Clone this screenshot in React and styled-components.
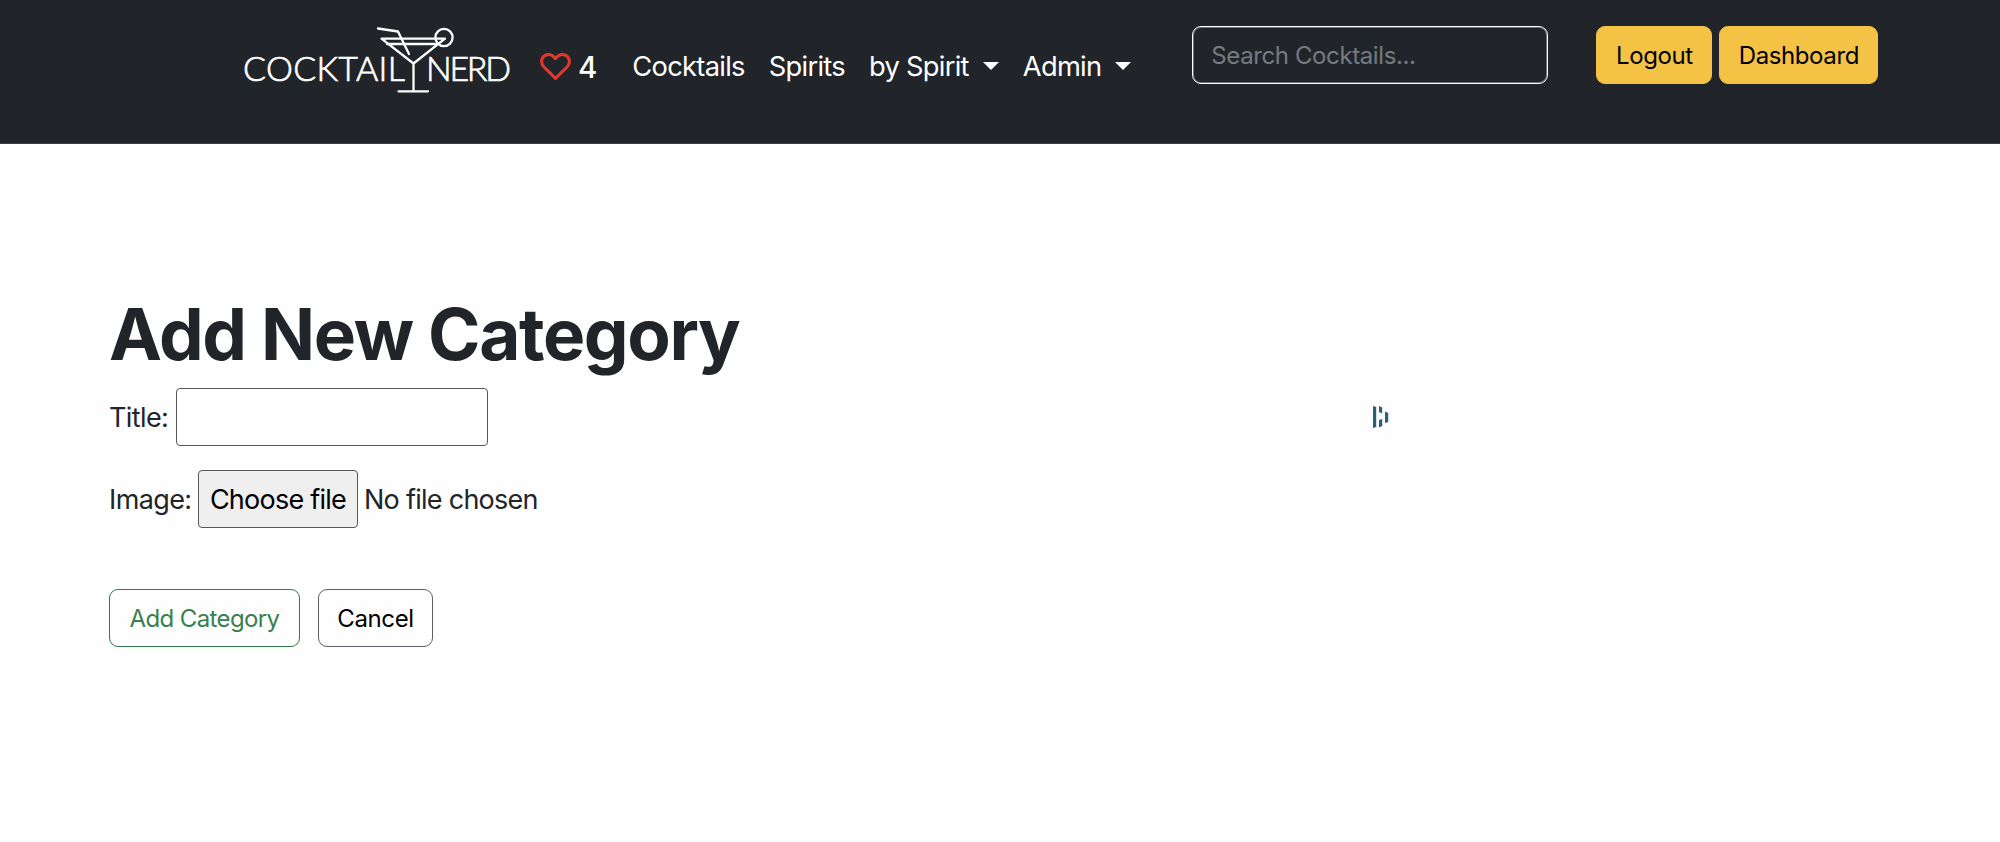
import React from "react";
import styled, { createGlobalStyle } from "styled-components";

const GlobalStyle = createGlobalStyle`
  *, *::before, *::after { box-sizing: border-box; }
  body {
    margin: 0;
    background: #fefefe;
    color: #212529;
    font-family: Inter, "Liberation Sans", sans-serif;
  }
`;

const Page = styled.div`
  min-height: 842px;
`;

const Navbar = styled.header`
  display: flex;
  align-items: flex-start;
  height: 144px;
  padding-left: 240px;
  background: #212529;
  border-bottom: 1px solid #3a3d40;
`;

const Logo = styled.svg`
  flex: none;
  width: 280px;
  height: 80px;
  margin-top: 20px;
`;

const LogoText = styled.text`
  font-family: Lato, sans-serif;
  font-size: 34px;
  font-weight: 300;
  fill: #fff;
  stroke: #fff;
  stroke-width: 0.7px;
`;

const Favourites = styled.a`
  display: flex;
  align-items: center;
  gap: 7px;
  height: 40px;
  margin: 47px 0 0 20px;
  color: #fff;
  font-size: 29.5px;
  font-weight: 500;
`;

const HeartIcon = styled.svg`
  width: 31px;
  height: 28px;
`;

const NavLinks = styled.nav`
  display: flex;
  flex: none;
  gap: 24px;
  width: 560px;
  margin: 47px 0 0 35px;
`;

const NavLink = styled.a`
  display: flex;
  align-items: center;
  color: #fff;
  font-size: 27.3px;
  line-height: 40px;
  letter-spacing: -0.72px;
  white-space: nowrap;
`;

const Caret = styled.span`
  margin: 0 0 3px 14px;
  border: 8px solid transparent;
  border-top-color: #fff;
  border-bottom: 0;
`;

const SearchInput = styled.input`
  flex: none;
  width: 356px;
  height: 58px;
  margin: 26px 48px 0 0;
  padding: 0 18px;
  border: 1px solid #fff;
  border-radius: 9px;
  box-shadow: inset 0 0 0 1px rgba(255, 255, 255, 0.35);
  background: transparent;
  color: #fff;
  font: 400 24px Inter, sans-serif;
  letter-spacing: -0.4px;
  &::placeholder {
    color: #747b82;
    opacity: 1;
  }
`;

const Account = styled.div`
  display: flex;
  gap: 7px;
  margin-top: 26px;
`;

const variants = {
  warning: "background: #f4c244; color: #000; border-color: #f4c244;",
  success: "color: #37804f; border-color: #2f7a48; letter-spacing: -0.62px;",
  secondary: "color: #000; border-color: #5c5f66;",
};

const Button = styled.button`
  flex: none;
  width: ${(p) => p.$width}px;
  height: 58px;
  padding: 0;
  border: 1px solid;
  border-radius: 9px;
  background: transparent;
  font: 400 24px Inter, sans-serif;
  letter-spacing: -0.4px;
  ${(p) => variants[p.$variant]}
`;

const Main = styled.main`
  padding: 147px 0 0 109px;
`;

const Title = styled.h1`
  margin: 0 0 11px;
  font-size: 71px;
  font-weight: 700;
  line-height: 86px;
  letter-spacing: -1.4px;
`;

const Field = styled.div`
  display: flex;
  align-items: center;
  height: 58px;
  margin-bottom: 24px;
  font-size: 27px;
  letter-spacing: -0.6px;
`;

const Label = styled.label`
  width: ${(p) => p.$width}px;
`;

const TextInput = styled.input`
  width: 312px;
  height: 58px;
  border: 1px solid #55575a;
  border-radius: 4px;
  background: #fff;
`;

const ExtensionIcon = styled.svg`
  width: 18px;
  height: 24px;
  margin-left: 884px;
`;

const FileButton = styled.button`
  width: 160px;
  height: 58px;
  padding: 0;
  border: 1px solid #55575a;
  border-radius: 4px;
  background: #efefef;
  color: #000;
  font: 400 27px Inter, sans-serif;
  letter-spacing: -0.75px;
`;

const FileName = styled.span`
  margin-left: 6px;
  letter-spacing: -0.73px;
`;

const Actions = styled.div`
  display: flex;
  gap: 18px;
  margin-top: 61px;
`;

export default function App() {
  return (
    <Page>
      <GlobalStyle />
      <Navbar>
        <Logo viewBox="240 20 280 80">
          <LogoText x="243" y="80.5" textLength="162">COCKTAIL</LogoText>
          <LogoText x="426" y="80.5" textLength="85">NERD</LogoText>
          <g fill="none" stroke="#fff" strokeWidth="2.3" strokeLinecap="round" strokeLinejoin="round">
            <path d="M378 28.5L398 31.5L409 54" />
            <path d="M381.5 38.7H445L413.5 63.5ZM387 44H438" />
            <path d="M413.5 63.5V91M398.5 91.3H428" />
            <circle cx="444" cy="37.5" r="8.6" />
          </g>
        </Logo>
        <Favourites>
          <HeartIcon viewBox="0 0 31 28" fill="none" stroke="#e0382c" strokeWidth="3.1" strokeLinejoin="round">
            <path d="M15.5 25.3L4 14C0.6 10.4 1 5.6 3.9 3.2C7.4 0.5 11.6 1.3 14.1 4.1L15.5 5.7L16.9 4.1C19.4 1.3 23.6 0.5 27.1 3.2C30 5.6 30.4 10.4 27 14Z" />
          </HeartIcon>
          4
        </Favourites>
        <NavLinks>
          <NavLink>Cocktails</NavLink>
          <NavLink>Spirits</NavLink>
          <NavLink>by Spirit<Caret /></NavLink>
          <NavLink>Admin<Caret /></NavLink>
        </NavLinks>
        <SearchInput placeholder="Search Cocktails..." />
        <Account>
          <Button $variant="warning" $width={116}>Logout</Button>
          <Button $variant="warning" $width={159}>Dashboard</Button>
        </Account>
      </Navbar>
      <Main>
        <Title>Add New Category</Title>
        <Field>
          <Label $width={67}>Title:</Label>
          <TextInput />
          <ExtensionIcon viewBox="0 0 18 24" fill="#2b5f77">
            <path d="M1 1L4.200 2V22L1 23ZM7 1L10.200 2.500V8.500L7 7ZM7 15L10.200 14V21L7 22.500ZM13 6.500L16.200 8V17L13 18Z" />
          </ExtensionIcon>
        </Field>
        <Field>
          <Label $width={89}>Image:</Label>
          <FileButton>Choose file</FileButton>
          <FileName>No file chosen</FileName>
        </Field>
        <Actions>
          <Button $variant="success" $width={191}>Add Category</Button>
          <Button $variant="secondary" $width={115}>Cancel</Button>
        </Actions>
      </Main>
    </Page>
  );
}
